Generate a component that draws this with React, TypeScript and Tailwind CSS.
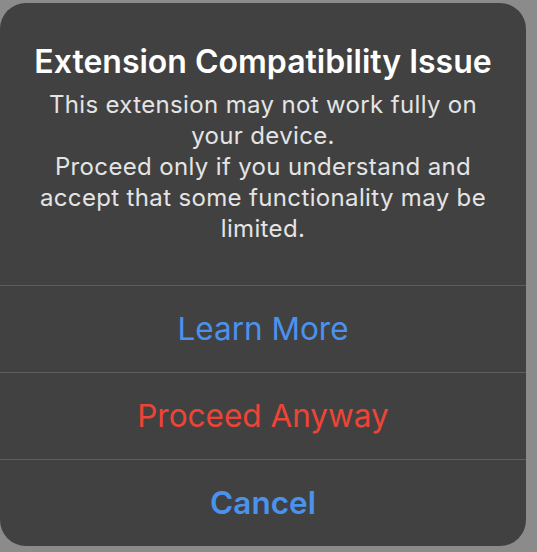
import React from 'react';

const App: React.FC = () => {
  const actions = [
    { label: 'Learn More', className: 'text-[#4b92ee] font-normal' },
    { label: 'Proceed Anyway', className: 'text-[#ee4436] font-normal' },
    { label: 'Cancel', className: 'text-[#4b92ee] font-semibold' },
  ];

  return (
    <div
      className="w-[537px] h-[552px] bg-[#8b8b8b] overflow-hidden"
      style={{ fontFamily: 'Inter, "Noto Sans", sans-serif' }}
    >
      <div className="mt-[3px] w-[526px] h-[543px] rounded-[26px] bg-[#414141] flex flex-col overflow-hidden">
        <div className="h-[282px] pt-[40px] px-2 text-center">
          <h2 className="text-[32px] leading-[38px] font-semibold text-white">
            Extension Compatibility Issue
          </h2>
          <p className="mt-[8px] text-[24px] leading-[31px] tracking-[0.35px] text-[#e4e4e4]">
            This extension may not work fully on
            <br />
            your device.
            <br />
            Proceed only if you understand and
            <br />
            accept that some functionality may be
            <br />
            limited.
          </p>
        </div>
        {actions.map((action) => (
          <button
            key={action.label}
            className={`h-[87px] border-t-[1.5px] border-[#5d5d5d] flex items-center justify-center text-[31.5px] ${action.className}`}
          >
            {action.label}
          </button>
        ))}
      </div>
    </div>
  );
};

export default App;
